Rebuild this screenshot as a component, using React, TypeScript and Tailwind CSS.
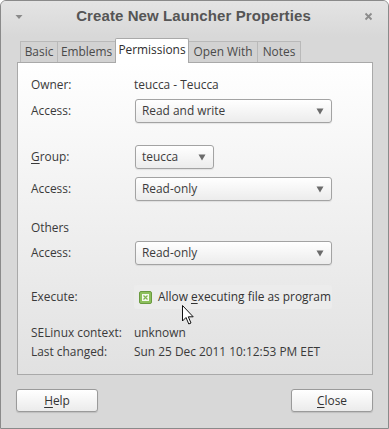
import React from "react";

function Arrow({ cls }: { cls?: string }) {
  return (
    <svg width="8" height="7" viewBox="0 0 8 7" className={cls}>
      <path d="M0.5 0.5 L7.5 0.5 L4 6.5 Z" fill="#6b6b6b" />
    </svg>
  );
}

function Combo({ text, cls }: { text: string; cls: string }) {
  return (
    <div
      className={`${cls} h-[24px] flex items-center justify-between pl-[6px] pr-[7px] rounded-[3px] border border-[#a3a3a3] bg-linear-to-b from-[#ffffff] to-[#ececec] shadow-[0_1px_1px_rgba(0,0,0,0.08)] text-[#3c3c3c]`}
    >
      <span>{text}</span>
      <Arrow />
    </div>
  );
}

function Tab({ label, cls, active }: { label: string; cls: string; active?: boolean }) {
  if (active) {
    return (
      <div
        className={`${cls} h-[25px] -mb-px relative z-10 flex items-center justify-center bg-white border border-b-0 border-[#a9a9a9] rounded-t-[2px] text-[#2e2e2e] pb-[2px]`}
      >
        {label}
      </div>
    );
  }
  return (
    <div
      className={`${cls} h-[21px] flex items-center justify-center bg-[#d2d2d2] border border-b-0 border-[#b9b9b9] -ml-px first:ml-0 text-[#4a4a4a]`}
    >
      {label}
    </div>
  );
}

function Cursor() {
  return (
    <svg
      width="13"
      height="21"
      viewBox="0 0 13 21"
      className="absolute left-[181px] top-[304px] z-20"
    >
      <path
        d="M0.5 0.5 L0.5 16 L4 12.5 L6.8 19 L9 18 L6.3 11.8 L11.2 11.8 Z"
        fill="#ffffff"
        stroke="#111111"
        strokeWidth="1"
        strokeLinejoin="round"
      />
    </svg>
  );
}

export default function App() {
  return (
    <div className="w-[389px] h-[429px] relative font-['Open_Sans','Liberation_Sans',sans-serif] text-[11.9px] whitespace-nowrap text-[#3a3a3a] bg-[#d8d8d8] border border-[#8a8a8a] rounded-t-[6px] overflow-hidden flex flex-col">
      {/* title bar */}
      <div className="h-[36px] shrink-0 flex items-center justify-between px-[14px] bg-linear-to-b from-[#e4e4e4] to-[#d8d8d8]">
        <svg width="8" height="6" viewBox="0 0 8 6" className="mt-[-4px]">
          <path d="M0.5 1 L7.5 1 L4 5 Z" fill="#8a8a8a" />
        </svg>
        <div className="font-['Liberation_Sans',sans-serif] font-bold text-[15px] text-[#555555] mt-[-6px] tracking-[0.1px]">
          Create New Launcher Properties
        </div>
        <svg width="9" height="9" viewBox="0 0 9 9" className="mt-[-6px] mr-[1px]">
          <path d="M1.5 1.5 L7.5 7.5 M7.5 1.5 L1.5 7.5" stroke="#8c8c8c" strokeWidth="1.8" />
        </svg>
      </div>

      {/* tabs */}
      <div className="h-[25px] shrink-0 flex items-end pl-[19px]">
        <Tab label="Basic" cls="w-[38px]" />
        <Tab label="Emblems" cls="w-[59px]" />
        <Tab label="Permissions" cls="w-[74px] -ml-px" active />
        <Tab label="Open With" cls="w-[70px] -ml-px" />
        <Tab label="Notes" cls="w-[44px]" />
      </div>

      {/* page */}
      <div className="ml-[16px] w-[356px] h-[313px] shrink-0 border border-[#a9a9a9] bg-linear-to-b from-[#ffffff] to-[#e1e1e1] pl-[13px] pt-[12px] flex flex-col">
        <div className="h-[20px] flex items-center">
          <div className="w-[103px]">Owner:</div>
          <div>teucca - Teucca</div>
        </div>
        <div className="h-[24px] mt-[4px] flex items-center">
          <div className="w-[104px]">Access:</div>
          <Combo text="Read and write" cls="w-[197px]" />
        </div>
        <div className="h-[24px] mt-[22px] flex items-center">
          <div className="w-[104px]">
            <span className="underline underline-offset-2">G</span>roup:
          </div>
          <Combo text="teucca" cls="w-[79px]" />
        </div>
        <div className="h-[24px] mt-[8px] flex items-center">
          <div className="w-[104px]">Access:</div>
          <Combo text="Read-only" cls="w-[197px]" />
        </div>
        <div className="h-[20px] mt-[17px] flex items-center">
          <div>Others</div>
        </div>
        <div className="h-[24px] mt-[3px] flex items-center">
          <div className="w-[104px]">Access:</div>
          <Combo text="Read-only" cls="w-[197px]" />
        </div>
        <div className="h-[24px] mt-[20px] flex items-center">
          <div className="w-[103px]">Execute:</div>
          <div className="w-[198px] h-[24px] rounded-[3px] bg-[#ececec] flex items-center pl-[5px]">
            <div className="w-[13px] h-[13px] shrink-0 rounded-[2px] bg-[#8cbf5c] border border-[#6a9a40] flex items-center justify-center">
              <svg width="7" height="7" viewBox="0 0 7 7" className="block">
                <rect x="0" y="0" width="7" height="7" fill="#f4f9ee" />
                <path d="M1.5 1.5 L5.5 5.5 M5.5 1.5 L1.5 5.5" stroke="#7fb24e" strokeWidth="1.2" />
              </svg>
            </div>
            <div className="ml-[6px] text-[#333333]">
              Allow <span className="underline underline-offset-2">e</span>xecuting file as program
            </div>
          </div>
        </div>
        <div className="h-[18px] mt-[15px] flex items-center">
          <div className="w-[103px]">SELinux context:</div>
          <div>unknown</div>
        </div>
        <div className="h-[18px] mt-[1px] flex items-center">
          <div className="w-[103px]">Last changed:</div>
          <div>Sun 25 Dec 2011 10:12:53 PM EET</div>
        </div>
      </div>

      {/* buttons */}
      <div className="mt-[14px] px-[15px] flex justify-between">
        <button className="w-[82px] h-[23px] rounded-[3px] border border-[#9a9a9a] bg-linear-to-b from-[#ffffff] to-[#ebebeb] shadow-[0_1px_1px_rgba(0,0,0,0.12)] text-[#333333] flex items-center justify-center">
          <span>
            <span className="underline underline-offset-2">H</span>elp
          </span>
        </button>
        <button className="w-[82px] h-[23px] rounded-[3px] border border-[#9a9a9a] bg-linear-to-b from-[#ffffff] to-[#ebebeb] shadow-[0_1px_1px_rgba(0,0,0,0.12)] text-[#333333] flex items-center justify-center">
          <span>
            <span className="underline underline-offset-2">C</span>lose
          </span>
        </button>
      </div>

      <Cursor />
    </div>
  );
}
